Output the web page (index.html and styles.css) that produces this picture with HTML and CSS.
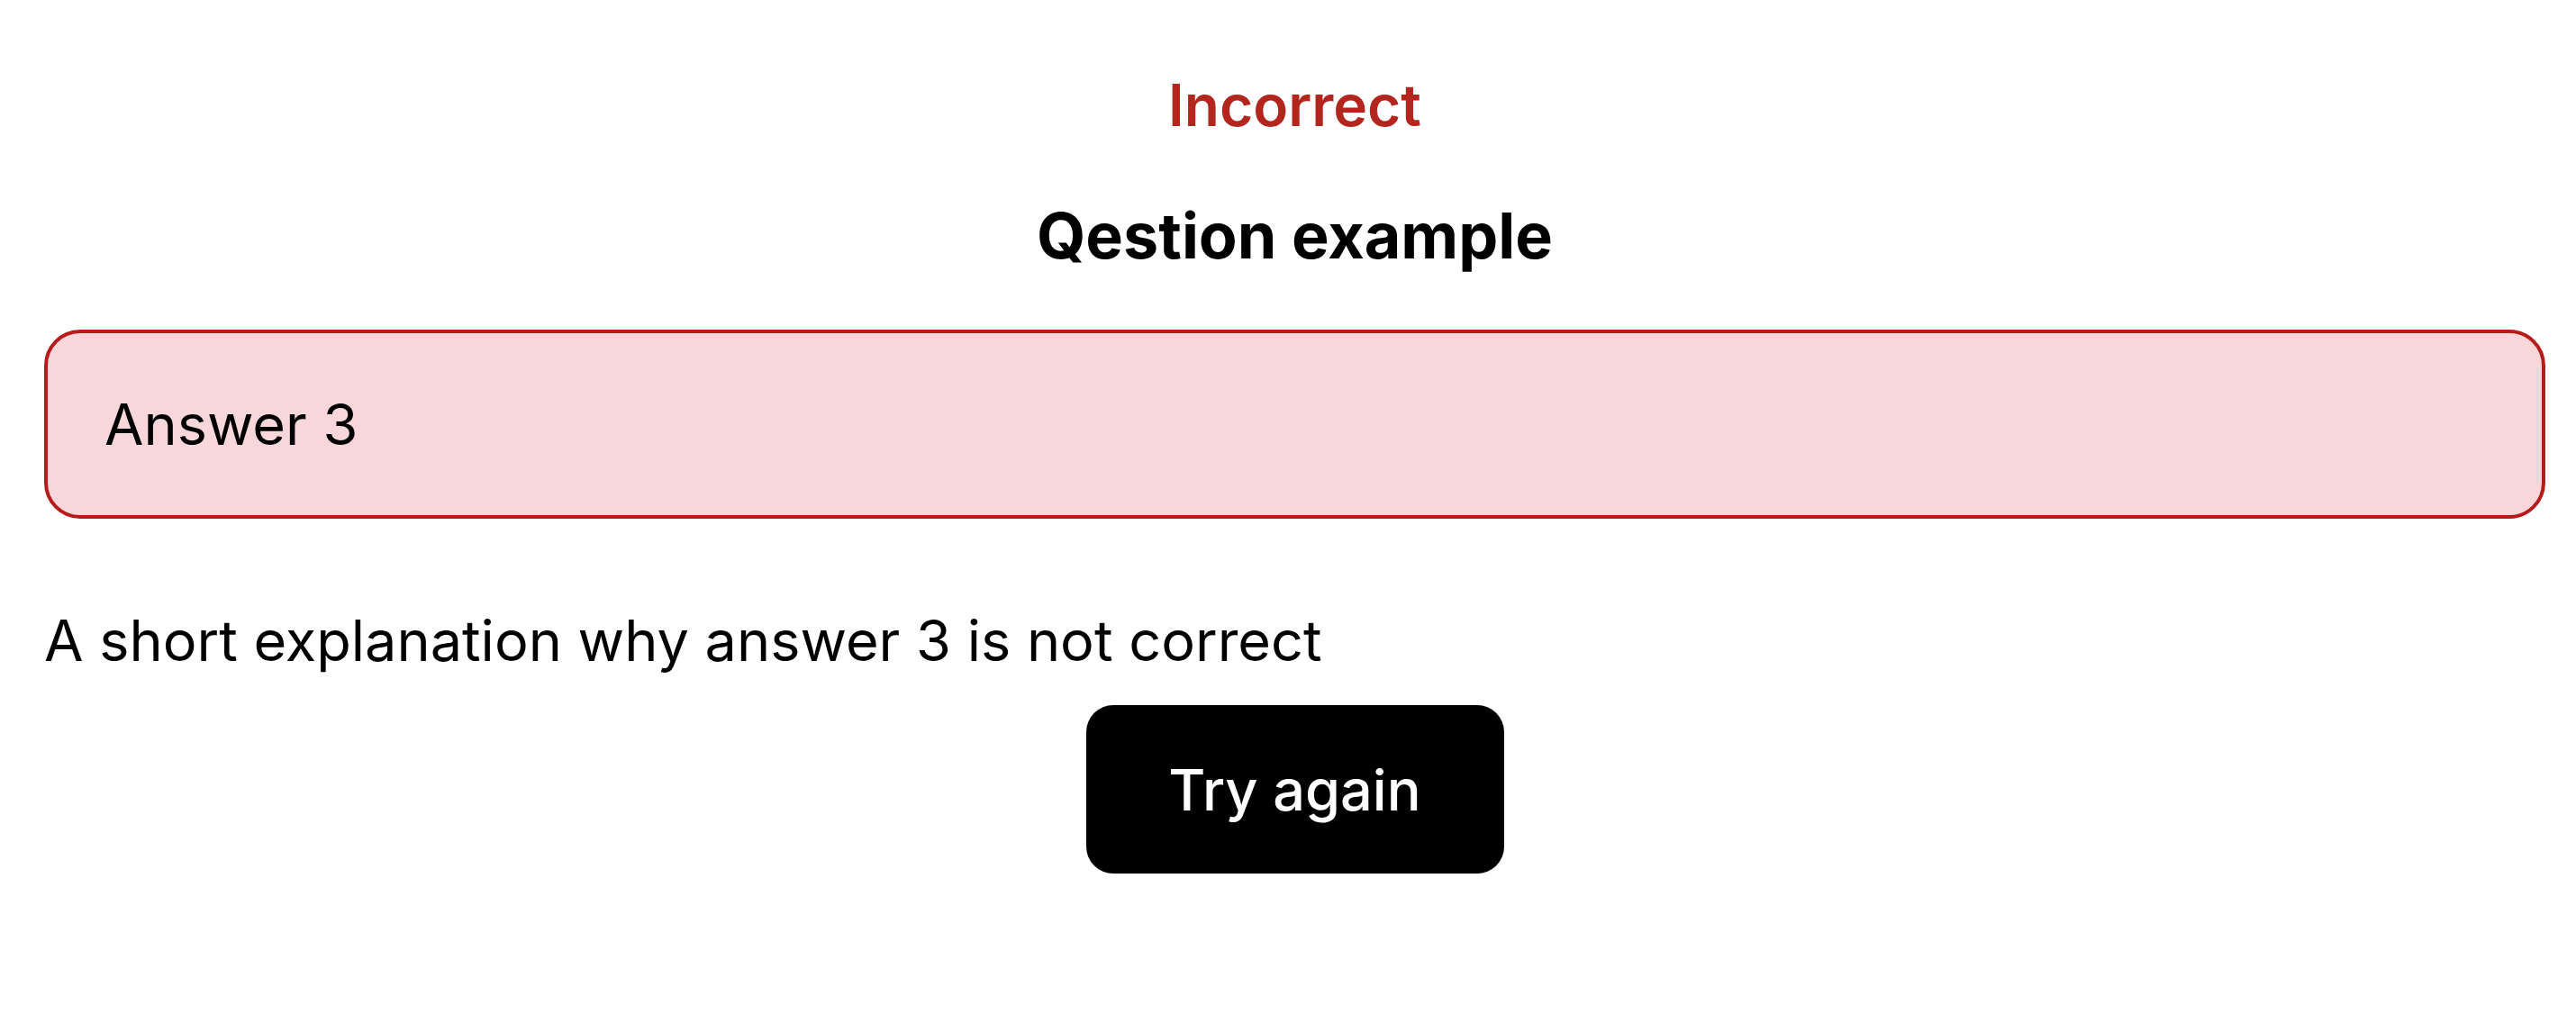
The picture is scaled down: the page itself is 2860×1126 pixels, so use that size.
FILE: index.html
```html
<!DOCTYPE html>
<html lang="en">
<head>
  <meta charset="UTF-8" />
  <meta name="viewport" content="width=device-width, initial-scale=1.0"/>
  <title>Quiz</title>
  <link rel="stylesheet" href="styles.css">
</head>
<body>

<div class="quiz">
  <div class="result">Incorrect</div>
  <h2 class="question">Qestion example</h2>

  <div class="answer wrong">Answer 3</div>

  <p class="explanation">A short explanation why answer 3 is not correct</p>

  <button class="retry">Try again</button>
</div>

</body>
</html>
```

FILE: styles.css
```css
body {
  font-family: Inter, 'Noto Sans', sans-serif;
  background: #fff;
  color: #000;
  margin: 0;
}
.quiz {
  display: flex;
  flex-direction: column;
  align-items: center;
  padding: 81px 34px 60px 49px;
}
.result {
  font-size: 64px;
  line-height: 72px;
  font-weight: 600;
  color: #b3261e;
}
.question {
  font-size: 70px;
  line-height: 84px;
  font-weight: 700;
  margin: 67px 0 0;
}
.answer {
  align-self: stretch;
  margin-top: 62px;
  padding: 65px 63px;
  font-size: 63px;
  line-height: 72px;
  border: 4px solid #b71c1c;
  border-radius: 40px;
  background: #f8d7da;
}
.explanation {
  align-self: stretch;
  margin: 99px 0 0;
  font-size: 63px;
  line-height: 72px;
}
.retry {
  margin-top: 36px;
  width: 464px;
  height: 187px;
  font-family: inherit;
  font-size: 63px;
  font-weight: 500;
  color: #fff;
  background: #000;
  border: none;
  border-radius: 30px;
  cursor: pointer;
}
```
